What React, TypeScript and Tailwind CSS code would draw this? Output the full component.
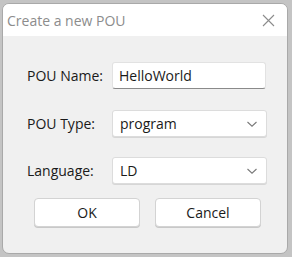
const font = { fontFamily: '"Open Sans", "Noto Sans", sans-serif' };

const Chevron = () => (
  <svg width="12" height="8" viewBox="0 0 12 8" className="text-[#7a7a7a]">
    <path d="M1.5 2 L6 6.2 L10.5 2" fill="none" stroke="currentColor" strokeWidth="1.1" />
  </svg>
);

const SelectBox = ({ value }: { value: string }) => (
  <div className="flex h-[27px] w-[155px] items-center justify-between rounded-[3px] border border-[#dcdcdc] bg-white pl-[7px] pr-[8px] text-[14px] text-[#1a1a1a] shadow-[0_1px_0_#d6d6d6]">
    <span>{value}</span>
    <Chevron />
  </div>
);

export default function App() {
  return (
    <div className="h-[257px] w-[292px] bg-[#c4c4c4] pl-[2px] pt-[3px]" style={font}>
      <div className="flex h-[251px] w-[286px] flex-col overflow-hidden rounded-[7px] border border-[#a9a9a9] bg-[#f0f0f0]">
        <div className="flex h-[32px] items-center justify-between bg-white pl-[4px] pr-[12px]">
          <span className="text-[14px] text-[#8c8c8c]">Create a new POU</span>
          <svg width="13" height="13" viewBox="0 0 13 13" className="text-[#8c8c8c]">
            <path d="M1 1 L12 12 M12 1 L1 12" stroke="currentColor" strokeWidth="1.1" />
          </svg>
        </div>
        <div className="flex flex-col pl-[24px] pt-[26px] text-[14px] text-[#1a1a1a]">
          <div className="flex items-center">
            <span className="w-[85px]">POU Name:</span>
            <div className="flex h-[27px] w-[154px] items-center rounded-[3px] border border-[#e2e2e2] border-b-[#8a8a8a] bg-white pl-[6px] text-[14px]">
              HelloWorld
            </div>
          </div>
          <div className="mt-[21px] flex items-center">
            <span className="w-[85px]">POU Type:</span>
            <SelectBox value="program" />
          </div>
          <div className="mt-[20px] flex items-center">
            <span className="w-[85px]">Language:</span>
            <SelectBox value="LD" />
          </div>
          <div className="mt-[14px] flex gap-[15px] pl-[7px]">
            <button className="flex h-[29px] w-[106px] items-center justify-center rounded-[4px] border border-[#d3d3d3] bg-white text-[14px] text-[#1a1a1a] shadow-[0_1px_0_#c8c8c8]">
              OK
            </button>
            <button className="flex h-[29px] w-[106px] items-center justify-center rounded-[4px] border border-[#d3d3d3] bg-white text-[14px] text-[#1a1a1a] shadow-[0_1px_0_#c8c8c8]">
              Cancel
            </button>
          </div>
        </div>
      </div>
    </div>
  );
}
